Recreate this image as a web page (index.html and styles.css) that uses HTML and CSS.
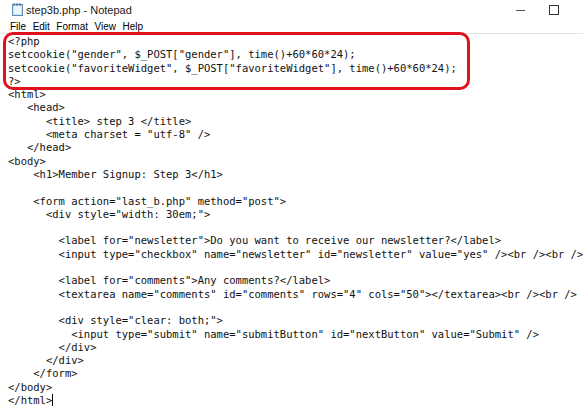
FILE: index.html
```html
<!DOCTYPE html>
<html>
<head>
    <meta charset="utf-8">
    <title>step3b.php - Notepad</title>
    <link rel="stylesheet" href="styles.css">
</head>
<body>
    <div class="window">
        <div class="title-bar">
            <svg class="app-icon" width="11" height="13" viewBox="0 0 11 13">
                <rect x="0.5" y="1.5" width="10" height="11" fill="#cfe3f3" stroke="#5b8fb9"/>
                <rect x="2" y="3" width="7" height="8" fill="#eef6fc"/>
                <line x1="2" y1="0" x2="2" y2="3" stroke="#4a6d8c"/>
                <line x1="5" y1="0" x2="5" y2="3" stroke="#4a6d8c"/>
                <line x1="8" y1="0" x2="8" y2="3" stroke="#4a6d8c"/>
            </svg>
            <span class="title-text">step3b.php - Notepad</span>
            <div class="window-controls">
                <span class="minimize"></span>
                <span class="maximize"></span>
            </div>
        </div>
        <div class="menu-bar">
            <span>File</span>
            <span>Edit</span>
            <span>Format</span>
            <span>View</span>
            <span>Help</span>
        </div>
        <div class="editor">
<pre class="code">&lt;?php
setcookie("gender", $_POST["gender"], time()+60*60*24);
setcookie("favoriteWidget", $_POST["favoriteWidget"], time()+60*60*24);
?&gt;
&lt;html&gt;
   &lt;head&gt;
      &lt;title&gt; step 3 &lt;/title&gt;
      &lt;meta charset = "utf-8" /&gt;
   &lt;/head&gt;
&lt;body&gt;
    &lt;h1&gt;Member Signup: Step 3&lt;/h1&gt;

    &lt;form action="last_b.php" method="post"&gt;
      &lt;div style="width: 30em;"&gt;

        &lt;label for="newsletter"&gt;Do you want to receive our newsletter?&lt;/label&gt;
        &lt;input type="checkbox" name="newsletter" id="newsletter" value="yes" /&gt;&lt;br /&gt;&lt;br /&gt;

        &lt;label for="comments"&gt;Any comments?&lt;/label&gt;
        &lt;textarea name="comments" id="comments" rows="4" cols="50"&gt;&lt;/textarea&gt;&lt;br /&gt;&lt;br /&gt;

        &lt;div style="clear: both;"&gt;
          &lt;input type="submit" name="submitButton" id="nextButton" value="Submit" /&gt;
        &lt;/div&gt;
      &lt;/div&gt;
    &lt;/form&gt;
&lt;/body&gt;
&lt;/html&gt;<span class="caret"></span></pre>
            <div class="highlight"></div>
        </div>
    </div>
</body>
</html>
```

FILE: styles.css
```css
body {
    margin: 0;
    padding: 0;
    background-color: #ffffff;
}

.window {
    width: 583px;
    height: 408px;
    overflow: hidden;
    background-color: #ffffff;
    font-family: "Liberation Sans", Arial, sans-serif;
    color: #000000;
}

.title-bar {
    display: flex;
    align-items: center;
    height: 20px;
    padding-left: 12px;
}

.app-icon {
    margin-top: -1px;
}

.title-text {
    font-size: 11px;
    margin-left: 3px;
    color: #1a1a1a;
}

.window-controls {
    display: flex;
    align-items: center;
    margin-left: auto;
    padding-right: 24px;
}

.minimize {
    width: 9px;
    height: 1px;
    background-color: #555555;
    margin-right: 24px;
}

.maximize {
    width: 8px;
    height: 8px;
    border: 1px solid #333333;
}

.menu-bar {
    display: flex;
    height: 13px;
    align-items: center;
    padding-left: 10px;
    font-size: 10px;
}

.menu-bar span {
    margin-right: 6.5px;
}

.editor {
    position: relative;
    border-top: 1px solid #e3e3e3;
    padding: 1px 0 0 8px;
}

.code {
    margin: 0;
    font-family: "DejaVu Sans Mono", "Liberation Mono", monospace;
    font-size: 10.5px;
    line-height: 13.3px;
    color: #111111;
}

.caret {
    display: inline-block;
    width: 1px;
    height: 12px;
    background-color: #000000;
    vertical-align: -2px;
}

.highlight {
    position: absolute;
    left: 3px;
    top: -2px;
    width: 461px;
    height: 52px;
    border: 3px solid #e0121b;
    border-radius: 10px;
}
```
